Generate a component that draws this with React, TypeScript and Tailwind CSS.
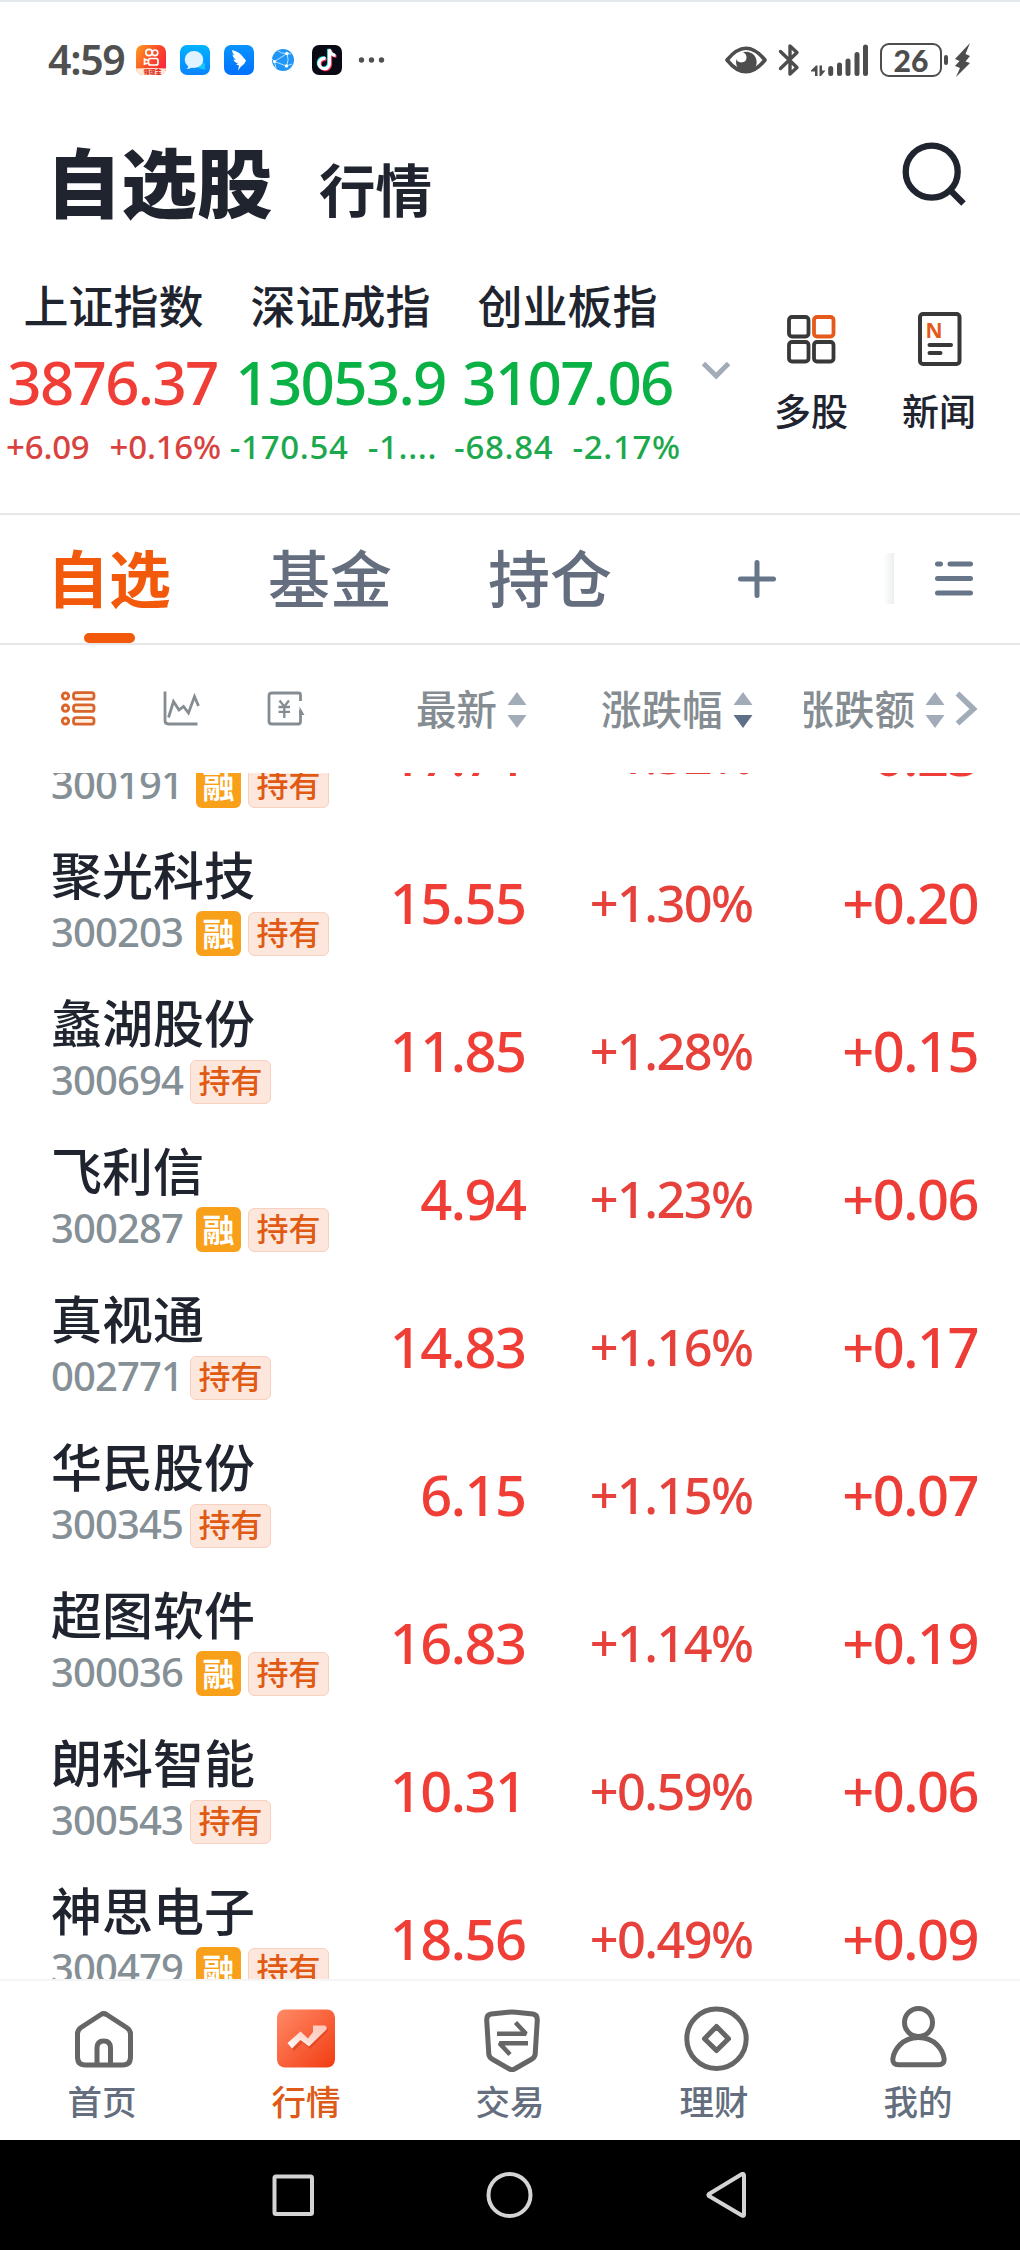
import React from "react";

const CJK = "font-['Noto_Sans_CJK_SC','Noto_Sans',sans-serif]";
const NUM = "font-['Noto_Sans','Noto_Sans_CJK_SC',sans-serif]";

function StatusBar() {
  return (
    <div className="flex h-[76px] items-center pl-[48px] pt-[40px]">
      <div className={`${NUM} h-[34px] w-[88px] text-[41px] leading-[32px] tracking-[-1.3px] font-semibold text-[#505050]`}>4:59</div>
      <svg className="h-[30px] w-[30px]" viewBox="0 0 30 30">
        <defs>
          <linearGradient id="ks" x1="0" y1="0" x2="1" y2="0.6">
            <stop offset="0" stopColor="#ff9d1e" />
            <stop offset="0.6" stopColor="#fb4a2b" />
            <stop offset="1" stopColor="#fa2a3c" />
          </linearGradient>
        </defs>
        <rect width="30" height="30" rx="7" fill="url(#ks)" />
        <g fill="none" stroke="#fff" strokeWidth="1.7">
          <circle cx="13" cy="7.5" r="3.2" />
          <circle cx="19" cy="7.8" r="2.8" />
          <rect x="12.5" y="13.5" width="9.5" height="6.5" rx="2" />
          <path d="M12 15.5 L8.5 14 V19 L12 18" />
        </g>
        <path d="M0 23.5 Q15 22.5 30 23.5 Q30 30 23 30 H7 Q0 30 0 23.5Z" fill="#ffe9d2" />
        <text x="7.500" y="29" fontSize="6" fontWeight="900" fill="#e02a20" fontFamily="Noto Sans CJK SC">领现金</text>
      </svg>
      <svg className="ml-[14px] h-[30px] w-[30px]" viewBox="0 0 30 30">
        <defs>
          <linearGradient id="msg" x1="0" y1="0" x2="0" y2="1">
            <stop offset="0" stopColor="#00b2ff" />
            <stop offset="1" stopColor="#0a84ff" />
          </linearGradient>
        </defs>
        <rect width="30" height="30" rx="7" fill="url(#msg)" />
        <path d="M17 22 Q22 25 26 24.500 Q24 22.500 25 19 L22 16Z" fill="#12c8fa" />
        <ellipse cx="14" cy="14.500" rx="9.300" ry="8.500" fill="#def3ff" />
        <path d="M8 19 Q9 22 6.500 24 Q10 24 13 22Z" fill="#def3ff" />
      </svg>
      <svg className="ml-[14px] h-[30px] w-[30px]" viewBox="0 0 30 30">
        <defs>
          <linearGradient id="wing" x1="0" y1="0" x2="0" y2="1">
            <stop offset="0" stopColor="#0a94ff" />
            <stop offset="1" stopColor="#0070ff" />
          </linearGradient>
        </defs>
        <rect width="30" height="30" rx="7" fill="url(#wing)" />
        <path d="M8 5 Q16 7 19 12 L22 15.500 Q21 19 17 21.500 L14 25.500 L15 20.500 L12 19.500 L14 18.500 Q10 17 9.500 14.500 L12 15 Q8.500 12 8.500 9.500 L10.500 10.500 Q8 7.500 8 5Z" fill="#fff" />
      </svg>
      <svg className="ml-[17px] h-[24px] w-[24px]" viewBox="0 0 24 24">
        <circle cx="12" cy="12" r="11" fill="#2196f6" />
        <g fill="none" stroke="#b5e3ff" strokeWidth="1">
          <path d="M16 5.500 L3.500 13.500 L15.500 18 Q18.500 12 16 5.500 M6.500 2.500 Q10 6 16 5.500 L20 6 M3.500 13.500 L1 11 M3.500 13.500 L5 20 M15.500 18 L21 16" />
        </g>
        <circle cx="16" cy="5.500" r="1.700" fill="#fff" />
        <circle cx="3.500" cy="13.500" r="1.500" fill="#fff" />
        <circle cx="15.500" cy="18" r="1.700" fill="#fff" />
      </svg>
      <svg className="ml-[17px] h-[30px] w-[30px]" viewBox="0 0 30 30">
        <rect width="30" height="30" rx="7" fill="#0a0a14" />
        <g fill="none" strokeWidth="3.200">
          <path d="M13.500 13.500 A5.200 5.200 0 1 0 17.500 18.500 V4.500 Q18.500 10 23.500 10.500" stroke="#25e8e4" transform="translate(-0.800,-0.600)" />
          <path d="M13.500 13.500 A5.200 5.200 0 1 0 17.500 18.500 V4.500 Q18.500 10 23.500 10.500" stroke="#f7315c" transform="translate(1,1)" />
          <path d="M13.500 13.500 A5.200 5.200 0 1 0 17.500 18.500 V4.500 Q18.500 10 23.500 10.500" stroke="#fff" />
        </g>
      </svg>
      <svg className="ml-[16px] h-[8px] w-[28px]" viewBox="358 56 28 8" fill="#505050">
        <circle cx="361.500" cy="60" r="2.700" />
        <circle cx="371.500" cy="60" r="2.700" />
        <circle cx="381.500" cy="60" r="2.700" />
      </svg>
      <svg className="ml-[338px] h-[32px] w-[44px]" viewBox="724 43 44 32">
        <path d="M727 59 Q746 35.500 765 59 Q746 82.500 727 59Z" fill="none" stroke="#4d4d4d" strokeWidth="3.600" strokeLinejoin="round" />
        <path d="M744 51 A10.300 10.300 0 1 1 736.500 58 Q737 61 741 61.500 Q747 61 746.500 56 Q746 52 743 51.500Z" fill="#4d4d4d" />
      </svg>
      <svg className="ml-[10px] h-[34px] w-[22px]" viewBox="778 42 22 34" fill="none" stroke="#4d4d4d" strokeWidth="3.400" strokeLinecap="round" strokeLinejoin="round">
        <path d="M780.500 50.500 L797 66.500 L790 73 V63 M780.500 67.500 L797 51.500 L790 45 V56" />
      </svg>
      <svg className="ml-[10px] h-[34px] w-[60px]" viewBox="810 42 60 34">
        <path d="M811 69.500 L816 64.500 H817.500 V75 H815 V70.500 H811Z M819.500 64.500 H822 V69.500 H825.500 L821 75 H819.500Z" fill="#4d4d4d" />
        <g stroke="#4d4d4d" strokeWidth="5" strokeLinecap="round">
          <path d="M830.700 67.500 V72.500 M839.500 64 V72.500 M848 60 V72.500 M857 53.500 V72.500 M865.500 46 V72.500" />
        </g>
      </svg>
      <div className="ml-[10px] flex h-[34px] w-[62px] items-center justify-center rounded-[9px] border-2 border-[#4d4d4d] font-['Lato',sans-serif] text-[30px] leading-none font-black text-[#4d4d4d]">26</div>
      <div className="ml-[2px] h-[10px] w-[4px] rounded-sm bg-[#4d4d4d]" />
      <svg className="ml-[6px] h-[34px] w-[18px]" viewBox="954 42 18 34">
        <path d="M970 42 L955 58 L959.500 60 L955 65 L960 67 L956 76 L970 62 L965.500 60.500 L970 55 L965.500 53Z" fill="#4d4d4d" />
      </svg>
    </div>
  );
}

function Header() {
  return (
    <div className="flex h-[176px] items-start pl-[46px] pt-[58px]">
      <h1 className={`${CJK} h-[90px] w-[228px] whitespace-nowrap text-[75.5px] leading-[86px] font-black text-[#20242f]`}>自选股</h1>
      <div className={`${CJK} ml-[45px] mt-[11px] w-[114px] whitespace-nowrap text-[56.5px] leading-[80px] font-bold text-[#20242f]`}>行情</div>
      <svg className="ml-[467px] mt-[4px] h-[68px] w-[68px]" viewBox="900 140 68 68" fill="none" stroke="#20242f">
        <circle cx="931.700" cy="171.700" r="26" strokeWidth="6.300" />
        <path d="M950 190 L963.500 203.500" strokeWidth="6.300" />
      </svg>
    </div>
  );
}

type IndexInfo = { name: string; value: string; diff: string; pct: string; up: boolean; truncated?: boolean };
const indexes: IndexInfo[] = [
  { name: "上证指数", value: "3876.37", diff: "+6.09", pct: "+0.16%", up: true },
  { name: "深证成指", value: "13053.9", diff: "-170.54", pct: "-1....", up: false, truncated: true },
  { name: "创业板指", value: "3107.06", diff: "-68.84", pct: "-2.17%", up: false },
];

function IndexStrip() {
  return (
    <div className="flex h-[261px] items-start border-b-2 border-[#e5e7e9]">
      {indexes.map((i) => (
        <div key={i.name} className="flex w-[227px] flex-col items-center whitespace-nowrap pt-[21px]">
          <div className={`${CJK} text-[45px] leading-[60px] font-medium text-[#20242f]`}>{i.name}</div>
          <div className={`${NUM} mt-[12px] text-[60px] leading-[70px] tracking-[-1.7px] font-medium ${i.up ? "pr-[2px] text-[#f03d36]" : "text-[#0ab145]"}`}>{i.value}</div>
          <div
            className={`${NUM} mt-[10px] flex text-[33px] leading-[40px] font-medium ${i.up ? "gap-[20px] tracking-[-0.2px] text-[#d8433f]" : "gap-[19px] tracking-[0.7px] text-[#1ca84c]"} ${i.truncated ? "pr-[14px]" : ""}`}
          >
            <span>{i.diff}</span>
            <span>{i.pct}</span>
          </div>
        </div>
      ))}
      <svg className="ml-[20px] mt-[107px] h-[20px] w-[30px]" viewBox="700 361 30 20" fill="none" stroke="#a2abb8" strokeWidth="5">
        <path d="M702.500 363.500 L715.200 376 L727.500 363.500" />
      </svg>
      <div className="flex flex-col items-center pl-[43px] pt-[56px]">
        <svg className="h-[58px] w-[52px]" viewBox="785 310 52 58" fill="none" stroke="#383838" strokeWidth="3.800">
          <rect x="789" y="317" width="19.500" height="19.500" rx="3" />
          <rect x="814" y="317" width="19.500" height="19.500" rx="3" stroke="#e5591a" />
          <rect x="789" y="342" width="19.500" height="19.500" rx="3" />
          <rect x="814" y="342" width="19.500" height="19.500" rx="3" />
        </svg>
        <div className={`${CJK} mt-[17px] text-[37px] leading-[50px] font-medium text-[#20242f]`}>多股</div>
      </div>
      <div className="flex flex-col items-center pl-[54px] pt-[56px]">
        <svg className="h-[58px] w-[48px]" viewBox="916 310 48 58">
          <rect x="921" y="314" width="39.500" height="50" rx="3" fill="none" stroke="#383838" strokeWidth="4" />
          <text x="926.500" y="337.500" fontSize="21" fontWeight="700" fontFamily="Noto Sans" fill="#e5591a">N</text>
          <path d="M930.500 345 H952 M930.500 353 H941.500" stroke="#383838" strokeWidth="4" strokeLinecap="round" />
        </svg>
        <div className={`${CJK} mt-[17px] text-[37px] leading-[50px] font-medium text-[#20242f]`}>新闻</div>
      </div>
    </div>
  );
}

function Tabs() {
  return (
    <div className={`${CJK} flex h-[130px] items-start border-b-2 border-[#e5e7e9] pl-[47px]`}>
      <div className="flex w-[124px] flex-col items-center">
        <div className="h-[118px] pt-[21px] text-[62px] leading-[80px] font-bold text-[#f2590a]">自选</div>
        <div className="h-[10px] w-[51px] rounded-full bg-[#f2590a]" />
      </div>
      <div className="ml-[97px] pt-[21px] text-[62px] leading-[80px] font-medium text-[#646e7e]">基金</div>
      <div className="ml-[96px] pt-[21px] text-[62px] leading-[80px] font-medium text-[#646e7e]">持仓</div>
      <svg className="ml-[124px] mt-[43px] h-[42px] w-[42px]" viewBox="735 558 42 42" stroke="#677589" strokeWidth="5" strokeLinecap="round">
        <path d="M756 562.500 V595.500 M739.500 579 H772.500" />
      </svg>
      <div className="ml-[105px] mt-[38px] h-[51px] w-[11px] bg-gradient-to-r from-white to-[#eceef0]" />
      <svg className="ml-[39px] mt-[44px] h-[40px] w-[42px]" viewBox="932 559 42 40" stroke="#677589" strokeWidth="5" strokeLinecap="round">
        <path d="M936.500 564 H939.500 M949 564 H969.500 M936.500 578.500 H969.500 M936.500 593 H969.500" />
      </svg>
    </div>
  );
}

function SortArrows({ active }: { active?: boolean }) {
  return (
    <svg className="h-[38px] w-[20px]" viewBox="0 0 20 38">
      <path d="M10 1 L19.500 14 H0.500Z" fill="#a2abb8" />
      <path d="M10 37 L19.500 24 H0.500Z" fill={active ? "#5f6f87" : "#a2abb8"} />
    </svg>
  );
}

function ColumnHead() {
  const label = `${CJK} -mt-[2px] text-[40.5px] leading-[60px] text-[#858d92] font-medium whitespace-nowrap`;
  return (
    <div className="flex h-[128px] items-center pl-[60px]">
      <svg className="h-[38px] w-[38px]" viewBox="60 690 38 38" fill="#fff1e2" stroke="#d9642c" strokeWidth="2.800">
        <circle cx="65.500" cy="696" r="3.200" />
        <circle cx="65.500" cy="708.200" r="3.200" />
        <circle cx="65.500" cy="721" r="3.200" />
        <rect x="73.500" y="692.700" width="20.500" height="6.500" rx="2.500" />
        <rect x="73.500" y="704.900" width="20.500" height="6.500" rx="2.500" />
        <rect x="73.500" y="717.700" width="20.500" height="6.500" rx="2.500" />
      </svg>
      <svg className="ml-[64px] h-[38px] w-[40px]" viewBox="162 690 40 38" fill="none" stroke="#858d92" strokeWidth="2.800">
        <path d="M165 691.500 V720.500 Q165 724 168.500 724 H197.500" />
        <path d="M168.500 717.500 L173.500 701.500 L179 710 L183.500 706.500 L188.500 713 L194.500 696.500 L198.500 706" />
      </svg>
      <svg className="ml-[64px] h-[38px] w-[40px]" viewBox="266 690 40 38">
        <path d="M300.500 701 V695 Q300.500 693 298.500 693 H272 Q269 693 269 695.500 V721.500 Q269 724 272 724 H298 Q300.500 724 300.500 721.500 V710" fill="none" stroke="#858d92" strokeWidth="2.800" />
        <path d="M299.500 706.500 L304.500 715 H299.500Z" fill="#858d92" />
        <path d="M279.500 700.500 L284.300 706.500 L289 700.500 M284.300 706.500 V718 M278.500 707 H290 M278.500 711.800 H290" fill="none" stroke="#858d92" strokeWidth="2.300" />
      </svg>
      <div className="ml-[110px] flex items-center">
        <span className={label}>最新</span>
        <div className="ml-[10px] mt-[2px]"><SortArrows /></div>
      </div>
      <div className="ml-[74px] flex items-center">
        <span className={label}>涨跌幅</span>
        <div className="ml-[10px] mt-[2px]"><SortArrows active /></div>
      </div>
      <div className="ml-[51px] flex items-center overflow-hidden">
        <span className={`${label} -ml-[10px]`}>涨跌额</span>
        <div className="ml-[10px] mt-[2px]"><SortArrows /></div>
      </div>
      <svg className="ml-[9px] h-[38px] w-[26px]" viewBox="954 690 26 38" fill="none" stroke="#a2abb8" strokeWidth="5.500">
        <path d="M957.500 693.500 L973.500 709 L957.500 723.500" />
      </svg>
    </div>
  );
}

type Stock = { name: string; code: string; margin: boolean; price: string; pct: string; diff: string };
const stocks: Stock[] = [
  { name: "潜能恒信", code: "300191", margin: true, price: "17.71", pct: "+1.32%", diff: "+0.23" },
  { name: "聚光科技", code: "300203", margin: true, price: "15.55", pct: "+1.30%", diff: "+0.20" },
  { name: "蠡湖股份", code: "300694", margin: false, price: "11.85", pct: "+1.28%", diff: "+0.15" },
  { name: "飞利信", code: "300287", margin: true, price: "4.94", pct: "+1.23%", diff: "+0.06" },
  { name: "真视通", code: "002771", margin: false, price: "14.83", pct: "+1.16%", diff: "+0.17" },
  { name: "华民股份", code: "300345", margin: false, price: "6.15", pct: "+1.15%", diff: "+0.07" },
  { name: "超图软件", code: "300036", margin: true, price: "16.83", pct: "+1.14%", diff: "+0.19" },
  { name: "朗科智能", code: "300543", margin: false, price: "10.31", pct: "+0.59%", diff: "+0.06" },
  { name: "神思电子", code: "300479", margin: true, price: "18.56", pct: "+0.49%", diff: "+0.09" },
];

function StockRow({ s }: { s: Stock }) {
  return (
    <div className="flex h-[148px] items-center pl-[51px]">
      <div className="w-[300px] pb-[3px]">
        <div className={`${CJK} text-[51px] leading-[56px] font-medium text-[#20242f]`}>{s.name}</div>
        <div className="mt-[10px] flex h-[45px] items-center">
          <span className={`${NUM} mt-[-4px] w-[134px] text-[40px] leading-[40px] tracking-[-0.9px] font-medium text-[#858f96]`}>{s.code}</span>
          {s.margin && (
            <span className={`${CJK} ml-[11px] mr-[-5px] flex h-[45px] w-[45px] items-center justify-center rounded-[6px] bg-[#f9a01b] pb-[4px] text-[32px] leading-none font-bold text-white`}>融</span>
          )}
          <span className={`${CJK} flex h-[44px] w-[81px] items-center justify-center rounded-[6px] border border-[#f8d0bf] bg-[#fde7dd] pb-[5px] text-[32px] leading-none font-medium text-[#e05a14] ${s.margin ? "ml-[12px]" : "ml-[5px]"}`}>持有</span>
        </div>
      </div>
      <div className={`${NUM} w-[174.500px] text-right text-[56px] leading-[60px] tracking-[-1.5px] font-medium text-[#f03d36]`}>{s.price}</div>
      <div className={`${NUM} w-[227px] pt-[2px] text-right text-[50.5px] leading-[60px] tracking-[-1.6px] font-medium text-[#e6413b]`}>{s.pct}</div>
      <div className={`${NUM} w-[225.500px] text-right text-[56px] leading-[60px] tracking-[-1.5px] font-medium text-[#ee3d37]`}>{s.diff}</div>
    </div>
  );
}

function NavIcon({ kind }: { kind: string }) {
  const line = { fill: "none", stroke: "#666", strokeWidth: 5, strokeLinejoin: "round" as const };
  if (kind === "home")
    return (
      <svg className="h-[66px] w-[66px]" viewBox="69 2006 66 66" {...line}>
        <path d="M101 2014.500 Q103.700 2012.800 106.500 2014.500 L126.500 2027.500 Q130.500 2030 130.500 2034 V2057 Q130.500 2065 122.500 2065 H85.500 Q77.500 2065 77.500 2057 V2034 Q77.500 2030 81 2027.500Z" />
        <path d="M97 2065 V2048 Q97 2041 103.700 2041 Q110.500 2041 110.500 2048 V2065" />
      </svg>
    );
  if (kind === "market")
    return (
      <svg className="h-[66px] w-[66px]" viewBox="273 2006 66 66">
        <defs>
          <linearGradient id="mk" x1="0" y1="0" x2="1" y2="1">
            <stop offset="0" stopColor="#ff8a66" />
            <stop offset="1" stopColor="#f23c12" />
          </linearGradient>
          <linearGradient id="mkArrow" x1="0" y1="1" x2="1" y2="0">
            <stop offset="0" stopColor="#fff" />
            <stop offset="0.500" stopColor="#ffd9cf" />
            <stop offset="1" stopColor="#ffc4b5" />
          </linearGradient>
        </defs>
        <rect x="277" y="2009.500" width="58" height="58" rx="8" fill="url(#mk)" />
        <path d="M289 2045 L301 2032.500 L309 2040 L317 2032 L312 2026 H326 Q328 2027 327 2029 L309 2047 L301.500 2040.500 L293 2049Z" transform="translate(1,2)" fill="#c93516" opacity="0.450" />
        <path d="M287.500 2043 L300.500 2031.500 L308 2038.500 L313 2032 V2025.500 H325 Q327.500 2027 326.500 2029.500 L309 2046.500 L300.500 2040 L292 2048.500Z" fill="url(#mkArrow)" />
      </svg>
    );
  if (kind === "trade")
    return (
      <svg className="h-[66px] w-[66px]" viewBox="477 2006 66 66" {...line}>
        <path d="M491 2014 L508 2012.200 Q512 2011.800 516 2012.200 L533 2014 Q537.500 2014.800 537.300 2020 L535.200 2054 Q535 2057 532 2059 L514.500 2069 Q512 2070.300 509.500 2069 L492 2059 Q489 2057 488.800 2054 L486.700 2020 Q486.500 2014.800 491 2014Z" />
        <path d="M497 2033.700 H526 L515.500 2022.500 M528 2043.300 H499.500 L510 2054.500" strokeWidth="4.500" strokeLinejoin="bevel" />
      </svg>
    );
  if (kind === "wealth")
    return (
      <svg className="h-[66px] w-[66px] overflow-visible" viewBox="681 2006 66 66" {...line}>
        <circle cx="716.500" cy="2038.700" r="29.700" />
        <path d="M716.500 2026.500 L728.500 2038.700 L716.500 2050.500 L704.500 2038.700Z" />
      </svg>
    );
  return (
    <svg className="h-[66px] w-[66px]" viewBox="885 2006 66 66" {...line}>
      <circle cx="918.500" cy="2022.500" r="14" />
      <path d="M918.500 2037.500 C935 2037.500 943 2050 944.200 2059 Q944.300 2064.800 938.500 2064.800 H898.500 Q892.500 2064.800 892.800 2059 C894 2050 902 2037.500 918.500 2037.500Z" />
    </svg>
  );
}

const nav = [
  { kind: "home", label: "首页" },
  { kind: "market", label: "行情" },
  { kind: "trade", label: "交易" },
  { kind: "wealth", label: "理财" },
  { kind: "me", label: "我的" },
];

export default function App() {
  return (
    <div className="flex h-[2250px] w-[1020px] flex-col overflow-hidden border-t-2 border-[#e5e8ec] bg-white">
      <StatusBar />
      <Header />
      <IndexStrip />
      <Tabs />
      <ColumnHead />
      <div className="h-[1206px] shrink-0 overflow-hidden">
        <div className="-mt-[93px]">
          {stocks.map((s) => (
            <StockRow key={s.code} s={s} />
          ))}
        </div>
      </div>
      <div className="grid h-[161px] shrink-0 grid-cols-5 border-t-2 border-[#f5f5f6]">
        {nav.map((n) => (
          <div key={n.kind} className="flex flex-col items-center pt-[25px]">
            <NavIcon kind={n.kind} />
            <div className={`${CJK} mt-[8px] text-[34.5px] leading-[40px] font-medium ${n.kind === "market" ? "text-[#de5a17]" : "text-[#646e7e]"}`}>{n.label}</div>
          </div>
        ))}
      </div>
      <div className="flex h-[110px] shrink-0 items-center bg-black pl-[272px]">
        <svg className="h-[46px] w-[476px]" viewBox="272 2172 476 46" fill="none" stroke="#d4d4d4" strokeWidth="4" strokeLinejoin="round">
          <rect x="274.500" y="2176.500" width="37.500" height="37.500" rx="1.500" />
          <circle cx="509.500" cy="2195" r="21" />
          <path d="M742 2174 Q744 2173.500 744 2175.500 V2214.500 Q744 2216.500 742 2215.500 L709 2196 Q708 2195 709 2194Z" />
        </svg>
      </div>
    </div>
  );
}
